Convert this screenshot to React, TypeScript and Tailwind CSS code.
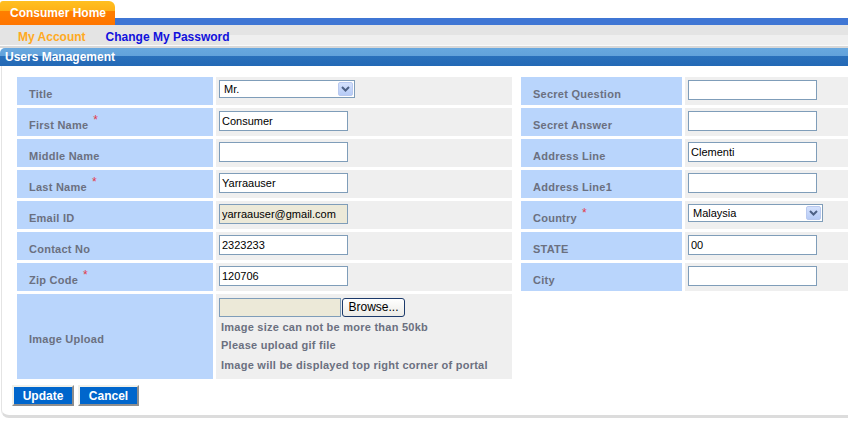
import type { ReactNode } from "react";

interface Field {
  label: string;
  required?: boolean;
  value?: string;
  kind?: "text" | "select" | "disabled";
  selectWidth?: string;
}

const LEFT_FIELDS: Field[] = [
  { label: "Title", value: "Mr.", kind: "select", selectWidth: "w-[136px]" },
  { label: "First Name", required: true, value: "Consumer" },
  { label: "Middle Name", value: "" },
  { label: "Last Name", required: true, value: "Yarraauser" },
  { label: "Email ID", value: "yarraauser@gmail.com", kind: "disabled" },
  { label: "Contact No", value: "2323233" },
  { label: "Zip Code", required: true, value: "120706" },
];

const RIGHT_FIELDS: Field[] = [
  { label: "Secret Question", value: "" },
  { label: "Secret Answer", value: "" },
  { label: "Address Line", value: "Clementi" },
  { label: "Address Line1", value: "" },
  { label: "Country", required: true, value: "Malaysia", kind: "select", selectWidth: "w-[135px]" },
  { label: "STATE", value: "00" },
  { label: "City", value: "" },
];

function Label({ children, required, className = "" }: { children: ReactNode; required?: boolean; className?: string }) {
  return (
    <div className={`whitespace-nowrap bg-[#b9d5fc] pl-3 text-[11px] font-bold leading-[13px] tracking-[0.25px] text-[#6b7080] ${className}`}>
      {children}
      {required && <span className="relative -top-[5px] ml-[5px] text-[12px] font-normal text-[#e23b4b]">*</span>}
    </div>
  );
}

function SelectBox({ value, width }: { value: string; width: string }) {
  return (
    <div className={`flex h-[18px] ${width} items-center justify-between border border-[#7f9db9] bg-white pl-[4px] pr-[1px] text-[11px] text-black`}>
      <span>{value}</span>
      <span className="flex h-[14px] w-[15px] items-center justify-center rounded-[2px] border border-[#b9c9ef] bg-[linear-gradient(#d4e1fc,#b6cbf6)]">
        <svg width="9" height="6" viewBox="0 0 9 6" fill="none">
          <path d="M1 1l3.5 3.5L8 1" stroke="#4d6185" strokeWidth="2" />
        </svg>
      </span>
    </div>
  );
}

function FieldValue({ field }: { field: Field }) {
  if (field.kind === "select") {
    return <SelectBox value={field.value ?? ""} width={field.selectWidth ?? "w-[136px]"} />;
  }
  return (
    <input
      defaultValue={field.value}
      readOnly
      className={`block h-[20px] w-[129px] border border-[#7f9db9] px-[2px] text-[11px] text-black outline-none ${
        field.kind === "disabled" ? "bg-[#ece9d8] text-[#222]" : "bg-white"
      }`}
    />
  );
}

function Rows({ fields }: { fields: Field[] }) {
  return (
    <>
      {fields.map((f) => (
        <div key={f.label} className="contents">
          <Label required={f.required} className="h-[28px] pt-[11px]">
            {f.label}
          </Label>
          <div className="flex h-[28px] items-start bg-[#efefef] pl-[3px] pt-[3px]">
            <FieldValue field={f} />
          </div>
        </div>
      ))}
    </>
  );
}

function BlueButton({ children, width }: { children: ReactNode; width: string }) {
  return (
    <button
      className={`h-[21px] ${width} border-2 border-t-[#f1f1ea] border-l-[#f1f1ea] border-b-[#8e8e8e] border-r-[#8e8e8e] bg-[#0066cc] text-[12px] font-bold leading-none text-white`}
    >
      {children}
    </button>
  );
}

export default function App() {
  return (
    <div className="h-[425px] w-[848px] overflow-hidden bg-white font-[family-name:Liberation_Sans,Arial,sans-serif]">
      {/* tab strip */}
      <div className="flex h-[25px] items-end">
        <div className="flex h-[24px] w-[115px] items-center whitespace-nowrap rounded-tl-[3px] rounded-tr-[6px] bg-[linear-gradient(#ffc021_0%,#ffb116_42%,#ff7f00_42%,#ff7500_100%)] pl-[10px] text-[12px] font-bold text-white">
          Consumer Home
        </div>
        <div className="h-[7px] flex-1 bg-[#3f76d4]" />
      </div>

      {/* sub nav */}
      <div className="flex h-[20px] bg-[linear-gradient(#e4e4e4_50%,#efefef_50%)]">
        <div className="flex h-full w-[229px] items-center gap-[20px] whitespace-nowrap bg-[#e4e4e4] pl-[18px] pt-[4px] text-[12px] font-bold">
          <span className="text-[#ffaa22]">My Account</span>
          <span className="text-[#1111dd]">Change My Password</span>
        </div>
      </div>
      <div className="h-[1px] bg-[#fafafa]" />
      <div className="h-[2px] bg-[#d8d8d8]" />

      {/* section header */}
      <div className="flex h-[18px] items-center rounded-tl-[5px] bg-[linear-gradient(#68a8df_0%,#62a2db_44%,#2a70bb_44%,#2369b6_100%)] pl-[5px] text-[12px] font-bold text-white">
        Users Management
      </div>

      {/* panel */}
      <div className="ml-[1px] rounded-bl-[8px] border-b-[3px] border-l border-b-[#dcdcdc] border-l-[#e4e4e4] pb-[9px] pt-[11px]">
        <div className="ml-[15px] flex gap-[9px]">
          <div className="grid grid-cols-[196px_296px] gap-x-[3px] gap-y-[3px]">
            <Rows fields={LEFT_FIELDS} />
            <Label className="flex h-[85px] items-center pt-[5px]">Image Upload</Label>
            <div className="flex h-[85px] flex-col whitespace-nowrap bg-[#efefef] pl-[3px] pt-[4px] text-[11px] font-bold leading-[13px] tracking-[0.25px] text-[#6b7080]">
              <div className="flex h-[19px]">
                <div className="h-[19px] w-[122px] border border-[#7f9db9] bg-[#ece9d8]" />
                <button className="ml-[1px] h-[19px] w-[63px] rounded-[3px] border border-[#1c3a6b] bg-[linear-gradient(#ffffff,#ecebe6)] text-[12px] font-normal tracking-normal text-black">
                  Browse...
                </button>
              </div>
              <div className="mt-[4px] pl-[2px]">Image size can not be more than 50kb</div>
              <div className="mt-[5px] pl-[2px]">Please upload gif file</div>
              <div className="mt-[7px] pl-[2px]">Image will be displayed top right corner of portal</div>
            </div>
          </div>
          <div className="grid h-fit grid-cols-[161px_163px] gap-x-[3px] gap-y-[3px]">
            <Rows fields={RIGHT_FIELDS} />
          </div>
        </div>

        <div className="ml-[10px] mt-[6px] flex gap-[4px]">
          <BlueButton width="w-[62px]">Update</BlueButton>
          <BlueButton width="w-[61px]">Cancel</BlueButton>
        </div>
      </div>
    </div>
  );
}
